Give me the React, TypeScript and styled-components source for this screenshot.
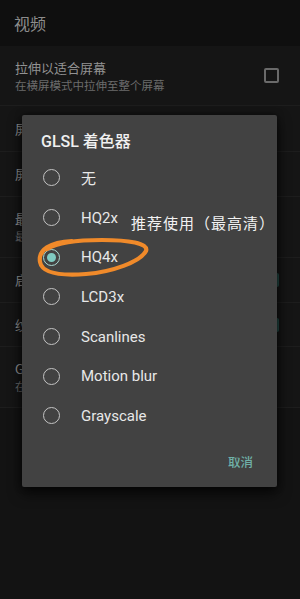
import React from "react";
import styled, { createGlobalStyle } from "styled-components";

const Global = createGlobalStyle`
  html, body { margin: 0; padding: 0; background: #131313; }
  body { width: 300px; height: 599px; overflow: hidden; font-family: Roboto, "Noto Sans CJK SC", sans-serif; }
`;

const Screen = styled.div`
  position: relative;
  width: 300px;
  height: 599px;
  background: #131313;
  display: flex;
  flex-direction: column;
  overflow: hidden;
`;

const Header = styled.div`
  height: 46px;
  flex: none;
  display: flex;
  align-items: center;
  padding-left: 14px;
  background: #0f0f0f;
  color: #8c8c8c;
  font-size: 16px;
  font-family: "Noto Sans CJK SC", sans-serif;
`;

const List = styled.div`
  display: flex;
  flex-direction: column;
  background: #151515;
`;

const Row = styled.div<{ $h: number }>`
  height: ${(p) => p.$h}px;
  flex: none;
  display: flex;
  align-items: center;
  justify-content: space-between;
  padding: 0 20px 0 15px;
  border-bottom: 1px solid #1d1d1d;
  box-sizing: border-box;
`;

const Texts = styled.div`
  display: flex;
  flex-direction: column;
  gap: 2px;
  font-family: "Noto Sans CJK SC", sans-serif;
`;

const Title = styled.div`
  color: #929292;
  font-size: 13px;
  line-height: 16px;
`;

const Sub = styled.div`
  color: #6c6c6c;
  font-size: 11.5px;
  line-height: 14px;
`;

const CheckBox = styled.div`
  width: 15px;
  height: 15px;
  box-sizing: border-box;
  border: 2px solid #6a6a6a;
  border-radius: 2px;
  margin-right: 1px;
`;

const SwitchTrack = styled.div`
  width: 20px;
  height: 14px;
  border-radius: 2px;
  background: #26504b;
  margin-right: 1px;
`;

const Dialog = styled.div`
  position: absolute;
  left: 22px;
  top: 115px;
  width: 255px;
  height: 372px;
  background: #424242;
  border-radius: 2px;
  box-shadow: 0 6px 14px rgba(0, 0, 0, 0.7), 0 0 6px rgba(0, 0, 0, 0.5);
  display: flex;
  flex-direction: column;
`;

const DialogTitle = styled.div`
  padding: 17px 0 0 19px;
  height: 20px;
  line-height: 20px;
  font-size: 16px;
  color: #f0f0f0;
  font-family: Roboto, "Noto Sans CJK SC", sans-serif;
  font-weight: 500;
  margin-bottom: 6px;
`;

const Options = styled.div`
  display: flex;
  flex-direction: column;
`;

const Option = styled.div`
  height: 39.7px;
  display: flex;
  align-items: center;
  padding-left: 21px;
  gap: 21px;
  color: #e8e8e8;
  font-size: 15px;
  font-family: Roboto, "Noto Sans CJK SC", sans-serif;
`;

const Radio = styled.div<{ $on?: boolean }>`
  width: 17px;
  height: 17px;
  box-sizing: border-box;
  border-radius: 50%;
  border: 1.8px solid ${(p) => (p.$on ? "#a9d9d3" : "#c4c4c4")};
  display: flex;
  align-items: center;
  justify-content: center;
  flex: none;
  &::after {
    content: "";
    display: ${(p) => (p.$on ? "block" : "none")};
    width: 9px;
    height: 9px;
    border-radius: 50%;
    background: #7fcbc2;
  }
`;

const Actions = styled.div`
  flex: 1;
  display: flex;
  justify-content: flex-end;
  align-items: center;
  padding-right: 24px;
`;

const TextButton = styled.div`
  color: #6fb0a7;
  font-size: 12.5px;
  font-family: "Noto Sans CJK SC", sans-serif;
  font-weight: 500;
`;

const Note = styled.div`
  position: absolute;
  left: 131px;
  top: 212px;
  color: #f2f2f2;
  font-size: 15px;
  line-height: 22px;
  letter-spacing: 1px;
  font-family: "Noto Sans CJK SC", sans-serif;
  white-space: nowrap;
`;

const Scribble = styled.svg`
  position: absolute;
  left: 0;
  top: 0;
  pointer-events: none;
`;

const options = ["无", "HQ2x", "HQ4x", "LCD3x", "Scanlines", "Motion blur", "Grayscale"];

export default function App() {
  return (
    <>
      <Global />
      <Screen>
        <Header>视频</Header>
        <List>
          <Row $h={60}>
            <Texts>
              <Title>拉伸以适合屏幕</Title>
              <Sub>在横屏模式中拉伸至整个屏幕</Sub>
            </Texts>
            <CheckBox />
          </Row>
          <Row $h={46}>
            <Texts>
              <Title>屏幕方向</Title>
            </Texts>
          </Row>
          <Row $h={45}>
            <Texts>
              <Title>屏幕比例</Title>
            </Texts>
          </Row>
          <Row $h={61}>
            <Texts>
              <Title>最大帧率</Title>
              <Sub>最大限度地提高帧率</Sub>
            </Texts>
          </Row>
          <Row $h={45}>
            <Texts>
              <Title>启用双线性过滤</Title>
            </Texts>
            <SwitchTrack />
          </Row>
          <Row $h={44}>
            <Texts>
              <Title>纹理过滤</Title>
            </Texts>
            <SwitchTrack />
          </Row>
          <Row $h={61}>
            <Texts>
              <Title>GLSL 着色器</Title>
              <Sub>在游戏画面上应用着色器</Sub>
            </Texts>
          </Row>
        </List>

        <Dialog>
          <DialogTitle>GLSL 着色器</DialogTitle>
          <Options>
            {options.map((o) => (
              <Option key={o}>
                <Radio $on={o === "HQ4x"} />
                <span>{o}</span>
              </Option>
            ))}
          </Options>
          <Actions>
            <TextButton>取消</TextButton>
          </Actions>
        </Dialog>

        <Note>推荐使用（最高清）</Note>

        <Scribble width="300" height="599" viewBox="0 0 300 599">
          <path
            d="M 72 241 C 50 242, 38 250, 40 262 C 42 273, 60 276, 86 274 C 112 272, 140 262, 146 251 C 149 243, 128 240, 102 240 C 78 240, 58 242, 47 249"
            fill="none"
            stroke="#f08a2a"
            strokeWidth="4.2"
            strokeLinecap="round"
            strokeLinejoin="round"
          />
        </Scribble>
      </Screen>
    </>
  );
}
